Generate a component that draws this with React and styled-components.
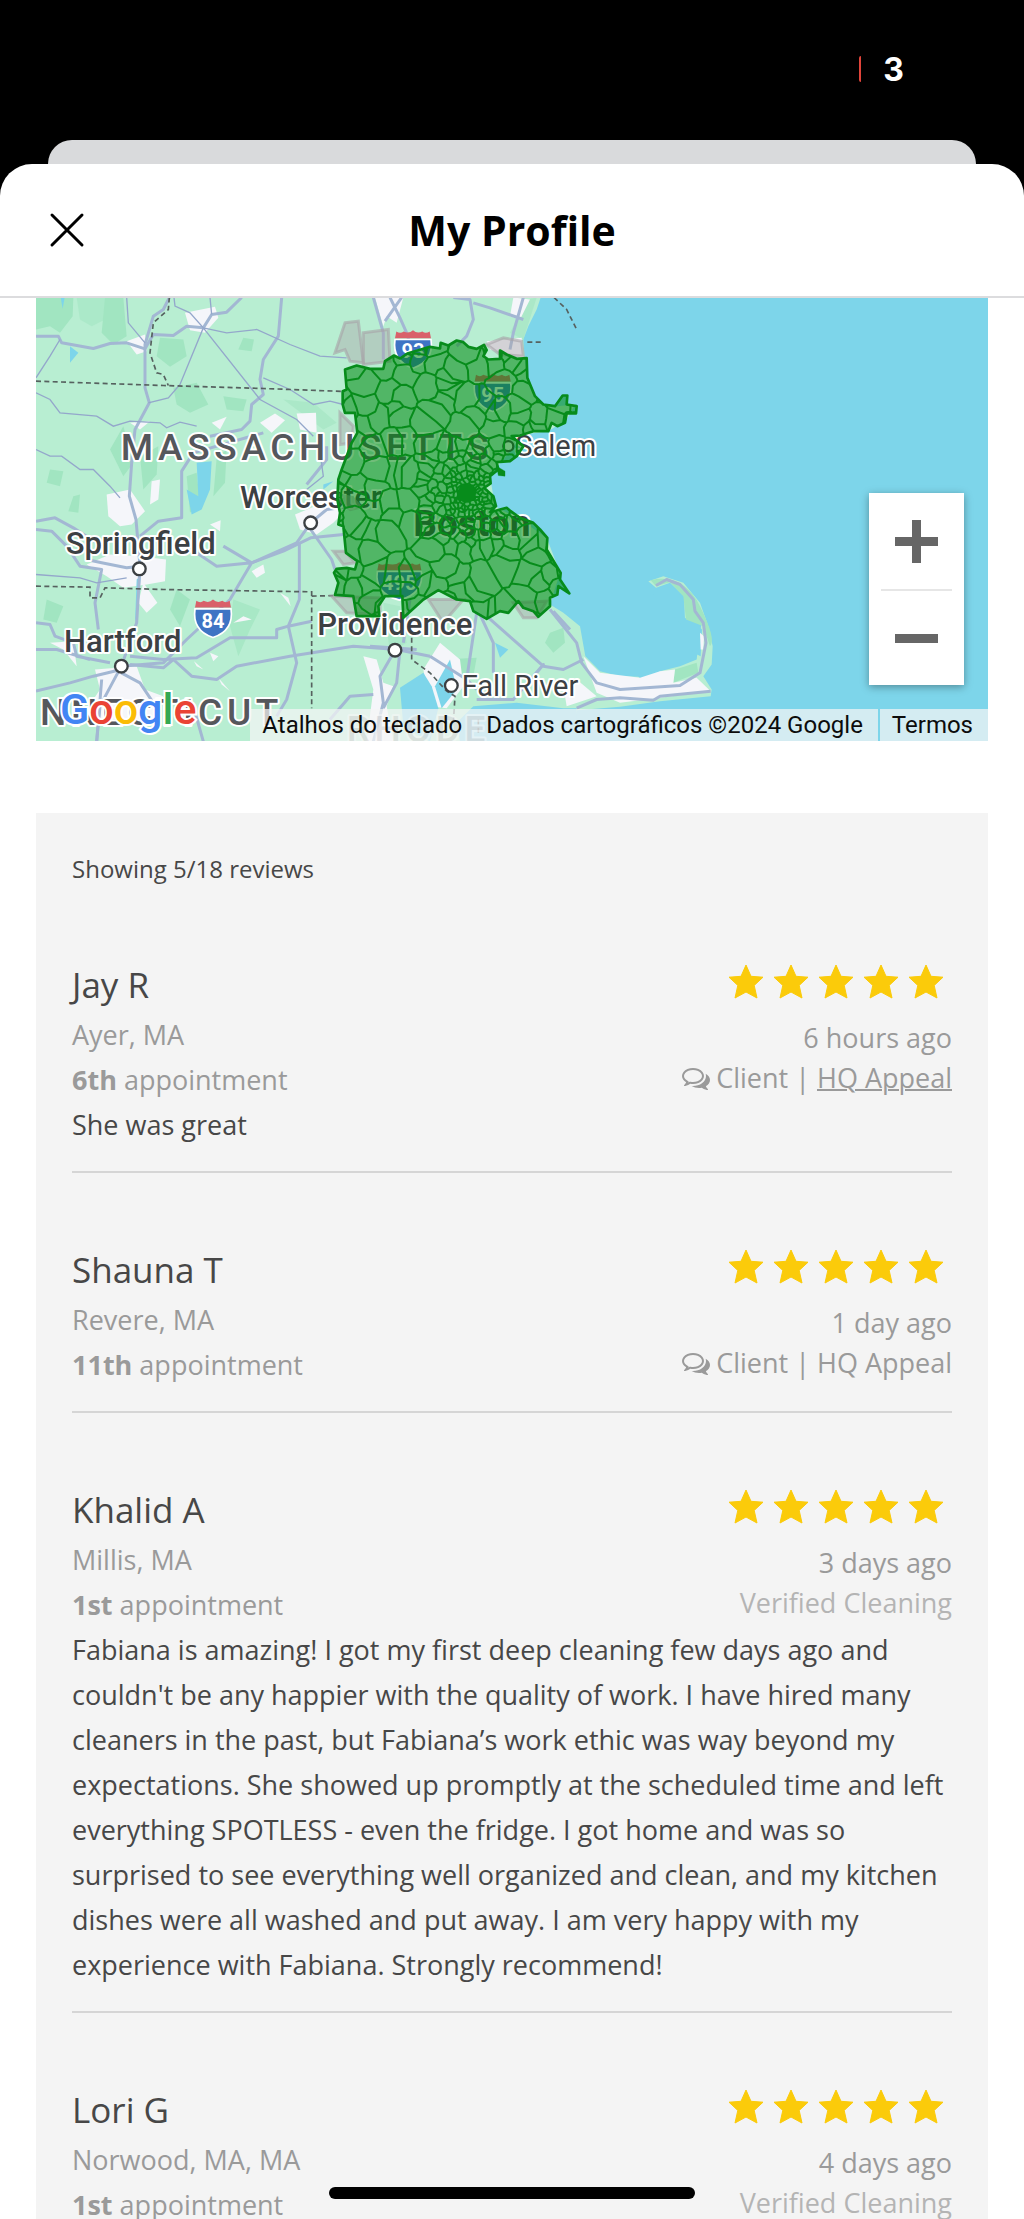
import styled, { createGlobalStyle } from "styled-components"

const GlobalStyle = createGlobalStyle`
  *, *::before, *::after {
    box-sizing: border-box;
  }

  body {
    margin: 0;
    background: #000000;
    font-family: "Open Sans", "Noto Sans", sans-serif;
    color: #474747;
  }

  button {
    font: inherit;
    color: inherit;
    padding: 0;
    border: 0;
    background: none;
    cursor: pointer;
  }

  a {
    color: inherit;
    text-decoration: none;
  }
`

const Screen = styled.div`
  height: 100vh;
  display: flex;
  flex-direction: column;
  overflow: hidden;
  position: relative;
`

const StatusBar = styled.div`
  flex: none;
  height: 140px;
  padding: 0 120px 2px 0;
  display: flex;
  align-items: center;
  justify-content: flex-end;
  gap: 22px;
  color: #ffffff;
  font-family: Inter, sans-serif;
  font-size: 32px;
  font-weight: 700;
`

const RecordingMark = styled.span`
  width: 2px;
  height: 26px;
  border-radius: 2px 0 0 2px;
  background: #e0443a;
`

const BackSheet = styled.div`
  flex: none;
  height: 24px;
  margin: 0 48px;
  border-radius: 24px 24px 0 0;
  background: #d9dadc;
`

const Sheet = styled.main`
  flex: 1;
  min-height: 0;
  display: flex;
  flex-direction: column;
  overflow: hidden;
  border-radius: 32px 32px 0 0;
  background: #ffffff;
`

const Header = styled.header`
  flex: none;
  height: 134px;
  padding: 0 48px;
  display: grid;
  grid-template-columns: 38px 1fr 38px;
  align-items: center;
  border-bottom: 2px solid #dcdcde;
`

const CloseButton = styled.button`
  height: 38px;

  svg {
    display: block;
  }
`

const Title = styled.h1`
  margin: 0;
  text-align: center;
  color: #000000;
  font-size: 41px;
  line-height: 56px;
  font-weight: 700;
`

const Content = styled.div`
  flex: 1;
  min-height: 0;
  padding: 0 36px;
`

const MapFrame = styled.section`
  position: relative;
  height: 443px;
  overflow: hidden;
  background: #7dd5ea;
  font-family: Roboto, sans-serif;
`

const MapDrawing = styled.svg`
  display: block;
  width: 100%;
  height: 100%;
`

const ZoomControl = styled.div`
  position: absolute;
  right: 24px;
  bottom: 56px;
  width: 95px;
  padding: 0 12px;
  background: #ffffff;
  box-shadow: 0 2px 8px rgba(0, 0, 0, 0.35);
`

const ZoomButton = styled.button`
  width: 100%;
  height: 96px;
  display: flex;
  align-items: center;
  justify-content: center;

  & + & {
    border-top: 2px solid #e6e6e6;
  }
`

const GoogleLogo = styled.a`
  position: absolute;
  left: 24px;
  bottom: 8px;
  font-size: 43px;
  line-height: 48px;
  font-weight: 500;
  paint-order: stroke fill;
  -webkit-text-stroke: 4px #ffffff;
`

const LogoLetter = styled.span`
  color: ${({ $color }) => $color};
`

const Attribution = styled.div`
  position: absolute;
  right: 0;
  bottom: 0;
  display: flex;
  gap: 2px;
  color: #0c0c0c;
  font-size: 24px;
  line-height: 32px;
  white-space: nowrap;
`

const AttributionGroup = styled.div`
  display: flex;
  gap: 24px;
  padding: 0 15px 0 12px;
  background: rgba(245, 245, 245, 0.72);
`

const Reviews = styled.section`
  margin-top: 72px;
  padding: 37px 36px 0;
  background: #f4f4f4;
`

const ReviewCount = styled.p`
  margin: 0;
  font-size: 24px;
  line-height: 38px;
`

const ReviewItem = styled.article`
  padding: 70px 0 24px;
  border-bottom: 2px solid #d5d5d5;
`

const ReviewTop = styled.div`
  display: flex;
  justify-content: space-between;
`

const Reviewer = styled.div`
  color: #9a9a9a;
  font-size: 27px;
  line-height: 45px;
`

const Name = styled.h2`
  margin: 0;
  color: #474747;
  font-size: 35px;
  line-height: 54px;
  font-weight: 400;
`

const ReviewMeta = styled.div`
  display: flex;
  flex-direction: column;
  align-items: flex-end;
  padding-top: 6px;
  color: #9a9a9a;
  font-size: 27px;
  line-height: 40px;
`

const Stars = styled.div`
  display: flex;
  gap: 9px;
  padding: 0 8px 19px 0;

  svg {
    display: block;
  }
`

const Source = styled.div`
  display: flex;
  align-items: center;
  gap: 6px;
`

const Verified = styled.div`
  color: #b4b4b4;
`

const AppealLink = styled.a`
  text-decoration: ${({ $underlined }) => ($underlined ? "underline" : "none")};
  text-decoration-thickness: 2px;
`

const Comment = styled.p`
  margin: 0;
  font-size: 27px;
  line-height: 45px;
`

const HomeIndicator = styled.div`
  position: absolute;
  left: 50%;
  bottom: 20px;
  width: 366px;
  height: 12px;
  border-radius: 6px;
  background: #000000;
  transform: translateX(-50%);
`

const reviews = [
  {
    name: "Jay R",
    place: "Ayer, MA",
    visit: "6th",
    when: "6 hours ago",
    appeal: true,
    underlined: true,
    comment: "She was great",
  },
  {
    name: "Shauna T",
    place: "Revere, MA",
    visit: "11th",
    when: "1 day ago",
    appeal: true,
  },
  {
    name: "Khalid A",
    place: "Millis, MA",
    visit: "1st",
    when: "3 days ago",
    comment:
      "Fabiana is amazing! I got my first deep cleaning few days ago and couldn't be any happier with the quality of work. I have hired many cleaners in the past, but Fabiana’s work ethic was way beyond my expectations. She showed up promptly at the scheduled time and left everything SPOTLESS - even the fridge. I got home and was so surprised to see everything well organized and clean, and my kitchen dishes were all washed and put away. I am very happy with my experience with Fabiana. Strongly recommend!",
  },
  {
    name: "Lori G",
    place: "Norwood, MA, MA",
    visit: "1st",
    when: "4 days ago",
  },
]

const googleLetters = [
  ["G", "#4285f4"],
  ["o", "#ea4335"],
  ["o", "#fbbc05"],
  ["g", "#4285f4"],
  ["l", "#34a853"],
  ["e", "#ea4335"],
]

const serviceArea =
  "M75 240L110 228L150 238L190 238L195 215L222 198L240 207L262 192L330 172L360 177L362 160L385 168L410 153L430 158L445 172L470 178L492 166L500 182L490 200L505 210L540 208L540 183L560 195L590 208L620 206L622 265L645 320L670 345L705 350L728 318L742 318L740 345L770 350L768 372L740 372L735 400L712 410L695 400L685 425L640 425L600 438L575 440L610 470L590 500L570 515L530 518L535 540L510 560L512 582L492 595L520 620L528 650L510 668L560 655L572 665L600 685L640 700L660 720L682 745L680 780L722 850L720 870L748 912L715 890L712 915L690 925L690 950L655 982L640 965L610 955L595 935L565 970L540 965L500 988L460 965L450 935L410 930L355 902L310 930L250 985L247 920L195 920L175 950L178 980L110 980L100 920L45 916L55 880L42 850L50 838L80 835L105 840L112 815L78 790L70 710L55 705L60 670L52 630L55 570L65 540L80 500L95 460L112 430L105 370L75 370L68 345L68 305L80 300Z"

// Seeds get closer together around Boston, where the zip codes are small.
function makeSeeds() {
  let state = 7
  const random = () => {
    state = (state * 16807) % 2147483647
    return state / 2147483647
  }
  const seeds = []
  const scatter = (x0, y0, x1, y1, step) => {
    for (let y = y0; y < y1; y += step) {
      for (let x = x0; x < x1; x += step) {
        const near = Math.hypot(x - 440, y - 600)
        if (step > 40 && (near < 150 || random() < 0.18)) continue
        if (step === 26 && (near > 160 || near < 65)) continue
        seeds.push([x + random() * step, y + random() * step])
      }
    }
  }
  scatter(20, 140, 780, 1000, 52)
  scatter(280, 440, 600, 760, 26)
  scatter(385, 555, 495, 660, 13)
  return seeds
}

// Bends an edge at its middle; neighbours share the edge, so both bend alike.
function bend([ax, ay], [bx, by]) {
  const mx = (ax + bx) / 2
  const my = (ay + by) / 2
  const length = Math.hypot(bx - ax, by - ay)
  const wave = Math.round(mx) * 12.9 + Math.round(my) * 78.2
  return [
    mx + Math.sin(wave) * length * 0.16,
    my + Math.cos(wave * 1.7) * length * 0.16,
  ]
}

function makeCells(seeds) {
  return seeds.map(([sx, sy]) => {
    let cell = [
      [sx - 120, sy - 120],
      [sx + 120, sy - 120],
      [sx + 120, sy + 120],
      [sx - 120, sy + 120],
    ]
    seeds.forEach(([tx, ty]) => {
      const dx = tx - sx
      const dy = ty - sy
      if ((!dx && !dy) || Math.hypot(dx, dy) > 340) return
      const limit = (tx * tx + ty * ty - sx * sx - sy * sy) / 2
      const side = ([x, y]) => x * dx + y * dy - limit
      const next = []
      cell.forEach((a, i) => {
        const b = cell[(i + 1) % cell.length]
        const sa = side(a)
        const sb = side(b)
        if (sa <= 0) next.push(a)
        if (sa <= 0 !== sb <= 0) {
          const t = sa / (sa - sb)
          next.push([a[0] + t * (b[0] - a[0]), a[1] + t * (b[1] - a[1])])
        }
      })
      cell = next
    })
    const points = cell.flatMap((a, i) => [a, bend(a, cell[(i + 1) % cell.length])])
    return `M${points.map(([x, y]) => `${x.toFixed(1)} ${y.toFixed(1)}`).join("L")}Z`
  })
}

const zipCodes = makeCells(makeSeeds()).join("")

function Shield({ x, y, width = 108, children }) {
  const r = width / 2
  return (
    <g transform={`translate(${x} ${y})`}>
      <path
        d={`M0 28H${width}C${width + 6} 70 ${width - 12} 100 ${r} 114C12 100 -6 70 0 28Z`}
        fill="#3f74c4"
        stroke="#ffffff"
        strokeWidth="5"
      />
      <path
        d={`M4 4Q16 12 26 4Q${r - 12} 12 ${r} 0Q${r + 12} 12 ${width - 26} 4Q${width - 16} 12 ${width - 4} 4L${width} 24H0Z`}
        fill="#d9606a"
      />
      <text
        x={r}
        y="84"
        fill="#ffffff"
        fontSize="60"
        fontWeight="700"
        textAnchor="middle"
      >
        {children}
      </text>
    </g>
  )
}

function AreaMap() {
  return (
    <MapDrawing
      viewBox="18 24 2856 1332"
      preserveAspectRatio="xMidYMid slice"
      role="img"
      aria-label="Service area around Boston"
    >
      <defs>
        <clipPath id="area">
          <path d={serviceArea} />
        </clipPath>
      </defs>

      <path
        d="M0 0H1540L1520 60L1495 110L1480 150L1484 205L1492 265L1515 320L1540 345L1580 350L1635 345L1610 390L1555 425L1480 435L1420 510L1380 560L1395 650L1470 690L1550 745L1590 850L1560 945L1600 970L1650 1010L1666 1100L1710 1145L1770 1160L1825 1162L1840 1175L1890 1145L1950 1130L2000 1110L2010 1030L2015 1000L1965 990L1962 920L1920 880L1878 895L1855 875L1900 860L1960 880L2010 940L2035 1010L2048 1070L2045 1125L2020 1160L2045 1200L2042 1220L1890 1235L1770 1252L1640 1262L1625 1356H0Z"
        fill="#b8eed2"
      />
      <path
        d="M2012 1100L2016 1020L1990 996L1962 984L1958 925L1918 884L1885 897L1870 915L1950 1000L1990 1090Z"
        fill="#7dd5ea"
      />

      <g fill="#a1e5c1">
        <path d="M18 24H130L128 80L90 130L60 110L18 120Z" />
        <path d="M140 24H230L225 90L185 110L150 90Z" opacity=".55" />
        <path d="M225 24H280L290 140L250 165L215 130Z" />
        <path d="M390 145L460 150L470 200L420 232L380 200Z" />
        <path d="M640 145L672 150L665 185L625 180Z" />
        <path d="M430 295L500 280L535 345L480 370L440 345Z" />
        <path d="M580 320L650 330L640 365L590 360Z" />
        <path d="M280 410L310 520L280 560L240 480Z" />
        <path d="M330 500L385 470L380 555L340 600Z" />
        <path d="M560 505L590 480L585 580L550 620Z" />
        <path d="M470 560L500 550L510 640L480 670Z" />
        <path d="M60 540L100 545L90 590L50 580Z" />
        <path d="M130 620L150 615L145 670L115 665Z" />
        <path d="M440 900L480 930L450 1010L420 960Z" />
        <path d="M610 930L690 960L660 1020L625 1100L600 1010Z" opacity=".7" />
        <path d="M50 930L100 950L80 1000L40 990Z" />
        <path d="M760 330L850 340L920 400L880 420Z" opacity=".6" />
        <path d="M1560 1030L1600 1015L1605 1060L1570 1090L1545 1060Z" />
        <path d="M1240 1110L1340 1105L1330 1160L1290 1180Z" />
        <path d="M1060 940L1110 950L1130 1060L1080 1090Z" opacity=".6" />
        <path d="M1440 130L1490 30L1520 24L1480 150Z" opacity=".6" />
        <path d="M1862 872Q1960 850 2010 950T2040 1070L2020 1010L1968 990L1960 920L1920 878L1878 890Z" />
        <path d="M1935 1140L2000 1120L2005 1150L1930 1180Z" />
      </g>

      <g fill="#f5f6fa">
        <path d="M465 70L555 52L565 85L525 130L480 122Z" />
        <path d="M290 155L345 135L350 185L320 195Z" />
        <path d="M230 615L300 600L345 665L305 705L270 710L235 680Z" />
        <path d="M365 575L390 570L385 630L360 645Z" />
        <path d="M545 400L590 382L570 420Z" />
        <path d="M690 400L735 372L765 392L725 430Z" />
        <path d="M800 372L858 370L860 430L810 420Z" />
        <path d="M300 400L360 395L330 420Z" />
        <path d="M795 675L880 640L970 640L910 700L860 735L810 720Z" />
        <path d="M170 825L240 795L330 800L408 810L405 875L350 885L280 895L230 860Z" />
        <path d="M540 705L572 692L570 725Z" />
        <path d="M665 845L700 825L705 850L680 865Z" />
        <path d="M340 880L382 940L350 970L325 940Z" />
        <path d="M610 1000L640 980L665 990Z" />
        <path d="M750 910L782 950L775 925Z" />
        <path d="M60 1060L130 1055L140 1130L100 1080Z" />
        <path d="M195 1140L320 1130L345 1200L400 1220L370 1290L150 1290L210 1200Z" />
        <path d="M492 1115L520 1140L500 1130Z" />
        <path d="M540 1090L565 1100L550 1115Z" />
        <path d="M565 1165L600 1205L575 1185Z" />
        <path d="M1035 24H1120L1100 100L1070 80L1060 110Z" />
        <path d="M1370 155L1475 145L1480 205L1420 190L1380 180Z" />
        <path d="M1450 24L1500 30L1470 90L1440 80Z" />
        <path d="M1000 1100L1040 1110L1060 1180L1090 1190L1070 1250L1090 1356H1010L1030 1200Z" />
        <path d="M1180 1140L1230 1060L1290 1110L1300 1190L1250 1256L1200 1250Z" />
        <path d="M1660 1100L1710 1150L1830 1165L1890 1145L1935 1140L1930 1180L2000 1165L2042 1205L1890 1225L1770 1240L1700 1210Z" />
        <path d="M2010 1030L2022 1040L2020 1080L2012 1080Z" />
        <path d="M1600 1190L1640 1170L1700 1220L1610 1250Z" />
      </g>

      <g fill="#7dd5ea">
        <path d="M500 520L545 515L540 600L515 660L485 675L470 600L505 620Z" />
        <path d="M92 24L104 24L98 58Z" />
        <path d="M120 170L145 190L120 220Z" />
        <path d="M320 870L332 860L325 960L315 1000Z" />
        <path d="M880 585L910 575L880 600Z" />
        <path d="M1110 1195L1180 1150L1205 1190L1225 1256L1200 1356L1120 1310Z" />
        <path d="M1260 1110L1280 1200L1235 1256L1215 1190Z" />
        <path d="M1395 1060L1435 1080L1410 1105Z" />
        <path d="M1280 1300L1330 1250L1460 1240L1600 1256L1640 1256V1356H1290Z" />
      </g>

      <g
        fill="none"
        stroke="#a3b7d3"
        strokeWidth="9"
        strokeLinejoin="round"
      >
        <path d="M418 24L400 60L370 80L345 165L345 295L358 340L315 420L305 520L298 620L318 690L330 830L320 1000L274 1130L210 1250L200 1356" />
        <path d="M18 140L85 140L95 160L190 177L240 162L290 160L345 178L370 135L430 138L470 110L520 115L545 75L590 68L635 24" />
        <path d="M755 24L745 140L700 210L690 270L700 315L665 345L660 395L635 420L540 440" />
        <path d="M330 830L290 835L215 820L170 810M330 740L385 695L455 685L455 545L490 490L700 430" />
        <path d="M18 695L75 685L130 715L200 760M18 720L65 725L110 770L150 830L215 840L195 940L205 1020" />
        <path d="M580 770L665 820L760 785L842 745L940 735M500 790L560 830L665 820L600 930L470 1050L400 1120L274 1130" />
        <path d="M842 700L800 760L665 820M842 700L890 660L970 650M842 720L905 810L915 840M830 585L890 510L890 470M808 760L808 930L775 1010L800 1120L770 1230L740 1280" />
        <path d="M300 1100L400 1110L500 1105L600 1045L740 1045L740 1020L775 1010L845 995M300 1125L400 1135L430 1110L485 1160L560 1170L620 1130L780 1100L970 1070L1100 1080L1200 1100" />
        <path d="M18 1000L60 1005L75 1040L130 1060L140 1100L240 1120M18 1080L80 1080L180 1110M18 1205L120 1180L190 1160L274 1140M274 1150L330 1180L370 1240M215 1170L200 1356M490 1250L520 1356" />
        <path d="M1030 24L1060 130L1060 210M1080 24L1110 85L1130 130L1150 200M1115 24L1065 95M1270 24L1320 30L1330 90L1310 140L1280 170M1480 24L1450 130L1440 180M1330 40L1380 55L1480 90" />
        <path d="M1095 1082L1050 1160L1060 1240L1030 1356M1110 1082L1100 1180L1060 1256M1140 930L1120 1060M1200 1100L1310 1170M1340 970L1310 1170L1340 1200M1350 975L1390 1060L1390 1150M1370 980L1540 1130L1600 1140L1660 1110M1520 1150L1540 1125L1450 1230L1340 1230M1020 1070L1160 1080" />
        <path d="M1560 960L1640 1060L1655 1120L1700 1180L1770 1200L1950 1188L2010 1150L2028 1060L2020 1000L1995 965L1990 930L1950 885L1910 870L1878 888" />
        <path d="M1640 1256L1700 1230L1770 1225L1870 1232L1890 1220L2042 1205M1570 965L1620 1020" />
        <path d="M900 1290L960 1220L1030 1215" />
      </g>

      <g fill="none" stroke="#94a7cb" strokeWidth="4">
        <path d="M290 24L295 100L345 160M432 24L435 50L480 70L520 115L450 285L415 325L355 340M540 24L545 75M520 115L690 330L800 390L850 440M520 115L590 130L680 120L780 165L870 200L950 205" />
        <path d="M18 310L60 330L90 370L200 380L250 410L300 395L390 400L410 415L450 398L500 410M700 265L780 300L850 345L900 335L940 345" />
        <path d="M18 480L60 500L95 500L150 540L190 540L240 590L270 625M18 855L150 865L200 880L290 865M18 265L60 200L90 150M870 490L880 560L830 600" />
      </g>

      <g
        fill="none"
        stroke="#56615f"
        strokeWidth="5"
        strokeDasharray="15 10"
      >
        <path d="M18 275L400 288L700 297L945 306" />
        <path d="M418 24L415 60L370 100L360 190L380 250L400 255L415 288" />
        <path d="M18 890L180 893L180 925L210 925L225 895L400 900L845 907L845 1256" />
        <path d="M845 920L920 918" />
        <path d="M1145 1045L1145 1110L1200 1150L1250 1205L1275 1220L1270 1300M1345 1290V1340" />
        <path d="M1572 24L1610 60L1640 120M1492 158H1540" />
      </g>

      <g
        fill="#aaa6aa"
        fillOpacity=".45"
        stroke="#a7a2a6"
        strokeOpacity=".6"
        strokeWidth="9"
      >
        <path d="M945 100L985 95L1000 220L960 215L945 180L915 190Z" />
        <path d="M1000 130L1075 120L1080 215L1000 225Z" />
        <path d="M1370 165L1420 145L1475 155L1480 200L1410 195Z" />
        <path d="M930 370L970 410L965 460L930 465Z" />
        <path d="M910 785L945 785L975 820L940 825Z" />
        <path d="M905 920L1050 925L1050 975L950 970Z" />
        <path d="M1195 930L1300 930L1240 1000Z" />
        <path d="M1450 940L1550 935L1520 985L1480 985Z" />
      </g>

      <g
        fill="#3c4043"
        stroke="#ffffff"
        strokeWidth="12"
        strokeLinejoin="round"
        paintOrder="stroke"
        fontSize="93"
        fontWeight="500"
      >
        <g fill="#55575c" fontSize="111" letterSpacing="14">
          <text x="272" y="510">MASSACHUSETTS</text>
          <text x="30" y="1305">NNECTICUT</text>
          <text x="950" y="1356" opacity=".45">RHODE</text>
        </g>
        <text x="630" y="655">Worcester</text>
        <text x="107" y="793">Springfield</text>
        <text x="102" y="1087">Hartford</text>
        <text x="862" y="1036">Providence</text>
        <text x="1295" y="1218" fontSize="87" fontWeight="400">Fall River</text>
        <text x="1456" y="500" fontSize="87" fontWeight="400">Salem</text>
        <text x="1150" y="738" fontSize="111" fontWeight="700">Boston</text>
      </g>

      <path
        d="M920 610L970 620L1000 655L960 665L930 640Z"
        fill="#aaa6aa"
        fillOpacity=".6"
      />

      <g fill="#ffffff" stroke="#3c4043" strokeWidth="7">
        <circle cx="842" cy="700" r="19" />
        <circle cx="328" cy="838" r="19" />
        <circle cx="274" cy="1130" r="19" />
        <circle cx="1095" cy="1082" r="19" />
        <circle cx="1264" cy="1188" r="19" />
        <circle cx="1435" cy="470" r="15" />
      </g>

      <Shield x="495" y="930">84</Shield>
      <Shield x="1095" y="122">93</Shield>
      <Shield x="1334" y="252">95</Shield>
      <Shield x="1042" y="818" width={132}>495</Shield>

      <g transform="translate(870 0)" stroke="#078c1b" strokeLinejoin="round">
        <path d={serviceArea} fill="#008a12" fillOpacity=".56" strokeWidth="8" />
        <path d={zipCodes} fill="none" strokeWidth="6" clipPath="url(#area)" />
        <circle cx="440" cy="612" r="28" fill="#078c1b" />
        <path d="M530 530L555 545L555 560L535 558Z" fill="#078c1b" />
      </g>
    </MapDrawing>
  )
}

function CommentsIcon() {
  return (
    <svg width="28" height="28" viewBox="0 0 1792 1792" aria-hidden="true">
      <path
        fill="currentColor"
        d="M704 384q-153 0-286 52t-211.500 141-78.500 191q0 82 53 158t149 132l97 56-35 84q34-20 62-39l44-31 53 10q78 14 153 14 153 0 286-52t211.500-141 78.500-191-78.500-191-211.500-141-286-52zm0-128q191 0 353.500 68.500t256.500 186.500 94 257-94 257-256.500 186.500-353.500 68.500q-86 0-176-16-124 88-278 128-36 9-86 16h-3q-11 0-20.500-8t-11.500-21q-1-3-1-6.500t.5-6.500 2-6l2.500-5 3.500-5.500 4-5 4.500-5 4-4.500q5-6 23-25t26-29.500 22.500-29 25-38.500 20.500-44q-124-72-195-177t-71-224q0-139 94-257t256.500-186.500 353.500-68.500zm822 1169q10 24 20.500 44t25 38.500 22.500 29 26 29.500 23 25q1 1 4 4.500t4.500 5 4 5 3.500 5.500l2.500 5 2 6 .5 6.500-1 6.500q-3 14-13 22t-22 7q-50-7-86-16-154-40-278-128-90 16-176 16-271 0-472-132 58 4 88 4 161 0 309-45t264-129q125-92 192-212t67-254q0-77-23-152 129 71 204 178t75 230q0 120-71 224.500t-195 176.500z"
      />
    </svg>
  )
}

function Rating() {
  return (
    <Stars role="img" aria-label="5 out of 5 stars">
      {[1, 2, 3, 4, 5].map((n) => (
        <svg key={n} width="36" height="35" viewBox="0 0 36 35">
          <path
            d="M18 1L23 12.3L35 13.2L26.2 21.4L29 34L18 28L7 34L9.8 21.4L1 13.2L13 12.3Z"
            fill="#fbcb0a"
            stroke="#fbcb0a"
            strokeLinejoin="round"
          />
        </svg>
      ))}
    </Stars>
  )
}

function Review({ review }) {
  return (
    <ReviewItem>
      <ReviewTop>
        <Reviewer>
          <Name>{review.name}</Name>
          <div>{review.place}</div>
          <div>
            <b>{review.visit}</b> appointment
          </div>
        </Reviewer>
        <ReviewMeta>
          <Rating />
          <div>{review.when}</div>
          {review.appeal ? (
            <Source>
              <CommentsIcon />
              <span>
                Client |{" "}
                <AppealLink href="#appeal" $underlined={review.underlined}>
                  HQ Appeal
                </AppealLink>
              </span>
            </Source>
          ) : (
            <Verified>Verified Cleaning</Verified>
          )}
        </ReviewMeta>
      </ReviewTop>
      {review.comment && <Comment>{review.comment}</Comment>}
    </ReviewItem>
  )
}

export default function App() {
  return (
    <Screen>
      <GlobalStyle />
      <StatusBar>
        <RecordingMark />
        <span>3</span>
      </StatusBar>
      <BackSheet />
      <Sheet>
        <Header>
          <CloseButton aria-label="Close">
            <svg width="38" height="38" viewBox="0 0 38 38">
              <path
                d="M4 4L34 34M34 4L4 34"
                stroke="#000000"
                strokeWidth="3"
                strokeLinecap="round"
              />
            </svg>
          </CloseButton>
          <Title>My Profile</Title>
        </Header>
        <Content>
          <MapFrame>
            <AreaMap />
            <GoogleLogo href="#google-maps" aria-label="Google">
              {googleLetters.map(([letter, color], i) => (
                <LogoLetter key={i} $color={color}>
                  {letter}
                </LogoLetter>
              ))}
            </GoogleLogo>
            <ZoomControl>
              <ZoomButton aria-label="Zoom in">
                <svg width="43" height="43" viewBox="0 0 43 43">
                  <path d="M17 0H26V17H43V26H26V43H17V26H0V17H17Z" fill="#666666" />
                </svg>
              </ZoomButton>
              <ZoomButton aria-label="Zoom out">
                <svg width="43" height="43" viewBox="0 0 43 43">
                  <path d="M0 17H43V26H0Z" fill="#666666" />
                </svg>
              </ZoomButton>
            </ZoomControl>
            <Attribution>
              <AttributionGroup>
                <button>Atalhos do teclado</button>
                <span>Dados cartográficos ©2024 Google</span>
              </AttributionGroup>
              <AttributionGroup>
                <a href="#terms">Termos</a>
              </AttributionGroup>
            </Attribution>
          </MapFrame>
          <Reviews>
            <ReviewCount>Showing 5/18 reviews</ReviewCount>
            {reviews.map((review) => (
              <Review key={review.name} review={review} />
            ))}
          </Reviews>
        </Content>
      </Sheet>
      <HomeIndicator />
    </Screen>
  )
}
